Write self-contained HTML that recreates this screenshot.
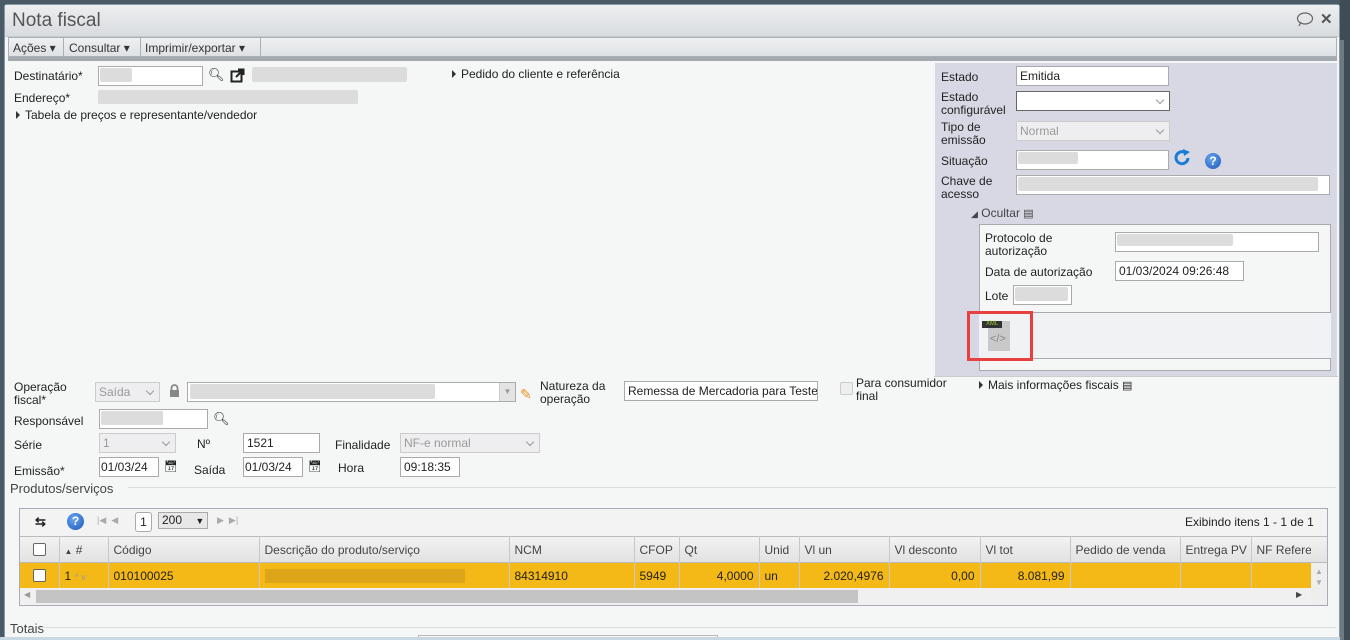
<!DOCTYPE html>
<html><head><meta charset="utf-8"><style>
*{margin:0;padding:0;box-sizing:border-box}
body{width:1350px;height:640px;overflow:hidden;background:#4a5a66;font-family:"Liberation Sans",sans-serif;font-size:12px;color:#222;position:relative}
.a{position:absolute}
.inp{position:absolute;background:#fff;border:1px solid #aaa;height:20px;padding:1px 3px;font-size:12px;line-height:16px;white-space:nowrap;overflow:hidden}
.dis{background:#eeeef0;border-color:#ccc;color:#999}
.blur{position:absolute;background:#dcdcdc;border-radius:2px}
.sel::after{content:"";position:absolute;right:6px;top:5px;width:5px;height:5px;border-right:1.5px solid #999;border-bottom:1.5px solid #999;transform:rotate(45deg)}
.lbl{position:absolute;line-height:13px}
.tri{display:inline-block;width:0;height:0;border-left:4px solid #333;border-top:4px solid transparent;border-bottom:4px solid transparent;margin-right:5px}
th,td{font-weight:normal;text-align:left;padding:0 5px;white-space:nowrap;overflow:hidden;border-right:1px solid #c8c8c8}
table{border-collapse:collapse;table-layout:fixed}
</style></head><body>
<div class="a" style="left:4px;top:4px;width:1336px;height:636px;background:#f5f6f6;border:1px solid #8a98a2;border-radius:3px 3px 0 0"></div>
<div class="a" style="left:5px;top:5px;width:1334px;height:32px;background:linear-gradient(#eceef0,#d9dcdf);border-bottom:1px solid #c5c8cc"></div>
<div class="a" style="left:12px;top:10px;font-size:19px;color:#555">Nota fiscal</div>
<svg class="a" style="left:1296px;top:12px" width="18" height="15"><ellipse cx="9" cy="6.5" rx="7.5" ry="5.5" fill="none" stroke="#666" stroke-width="1.2"/><path d="M3 14 L5 10" stroke="#666" stroke-width="1.2"/></svg>
<div class="a" style="left:1320px;top:10px;font-size:15px;font-weight:bold;color:#555">✕</div>
<div class="a" style="left:8px;top:37px;width:1329px;height:20px;background:linear-gradient(#eef0f2,#dfe2e5);border:1px solid #aab0b5"></div>
<div class="a" style="left:13px;top:41px;color:#333">Ações ▾</div>
<div class="a" style="left:63px;top:38px;width:1px;height:18px;background:#aab0b5"></div>
<div class="a" style="left:69px;top:41px;color:#333">Consultar ▾</div>
<div class="a" style="left:140px;top:38px;width:1px;height:18px;background:#aab0b5"></div>
<div class="a" style="left:145px;top:41px;color:#333">Imprimir/exportar ▾</div>
<div class="a" style="left:260px;top:38px;width:1px;height:18px;background:#aab0b5"></div>
<div class="a" style="left:8px;top:57px;width:1329px;height:4px;background:#a4aab0"></div>

<div class="lbl" style="left:14px;top:70px">Destinatário*</div>
<div class="inp" style="left:98px;top:66px;width:105px"></div><div class="blur" style="left:100px;top:68px;width:32px;height:14px"></div>
<div class="a" style="left:208px;top:67px;font-size:13px">&#x1F50D;&#xFE0E;</div>
<svg class="a" style="left:230px;top:68px" width="15" height="15"><rect x="1.5" y="3.5" width="10" height="10" fill="none" stroke="#222" stroke-width="2"/><path d="M6 9 L13 2 M8 1.5 H13.5 V7" stroke="#222" stroke-width="2" fill="none"/></svg>
<div class="blur" style="left:252px;top:67px;width:155px;height:15px"></div>
<div class="lbl" style="left:452px;top:68px"><span class="tri"></span>Pedido do cliente e referência</div>
<div class="lbl" style="left:14px;top:92px">Endereço*</div>
<div class="blur" style="left:98px;top:90px;width:260px;height:14px"></div>
<div class="lbl" style="left:16px;top:109px"><span class="tri"></span>Tabela de preços e representante/vendedor</div>

<!-- right panel -->
<div class="a" style="left:935px;top:63px;width:402px;height:314px;background:#d8d8e4"></div>
<div class="lbl" style="left:941px;top:71px">Estado</div>
<div class="inp" style="left:1016px;top:66px;width:153px">Emitida</div>
<div class="lbl" style="left:941px;top:91px">Estado<br>configurável</div>
<div class="inp sel" style="left:1016px;top:91px;width:154px;border-color:#666"></div>
<div class="lbl" style="left:941px;top:121px">Tipo de<br>emissão</div>
<div class="inp dis sel" style="left:1016px;top:121px;width:154px">Normal</div>
<div class="lbl" style="left:941px;top:155px">Situação</div>
<div class="inp" style="left:1016px;top:150px;width:153px"></div><div class="blur" style="left:1018px;top:152px;width:60px;height:12px"></div>
<svg class="a" style="left:1174px;top:149px" width="18" height="17"><path d="M14 9 A6 6 0 1 1 11 3.5" fill="none" stroke="#1c7cd0" stroke-width="3"/><path d="M9 0 L16 3 L10 7 Z" fill="#1c7cd0"/></svg>
<div class="a" style="left:1205px;top:153px;width:16px;height:16px;border-radius:50%;background:radial-gradient(circle at 40% 35%,#6aa6f0,#1a55b8);color:#fff;font-weight:bold;font-size:12px;text-align:center;line-height:16px">?</div>
<div class="lbl" style="left:941px;top:175px">Chave de<br>acesso</div>
<div class="inp" style="left:1016px;top:175px;width:314px"></div><div class="blur" style="left:1018px;top:177px;width:300px;height:14px"></div>
<div class="lbl" style="left:971px;top:207px;color:#444"><span style="font-size:9px">◢</span> Ocultar <span style="font-size:11px">▤</span></div>
<div class="a" style="left:979px;top:224px;width:352px;height:147px;background:#f5f6f6;border:1px solid #aaa"></div>
<div class="a" style="left:979px;top:312px;width:352px;height:47px;border-top:1px solid #aaa;border-bottom:1px solid #aaa;background:#f1f2f3"></div>
<div class="lbl" style="left:985px;top:232px">Protocolo de<br>autorização</div>
<div class="inp" style="left:1115px;top:232px;width:204px"></div><div class="blur" style="left:1117px;top:234px;width:116px;height:12px"></div>
<div class="lbl" style="left:985px;top:266px">Data de autorização</div>
<div class="inp" style="left:1115px;top:261px;width:129px">01/03/2024 09:26:48</div>
<div class="lbl" style="left:985px;top:290px">Lote</div>
<div class="inp" style="left:1013px;top:285px;width:59px"></div><div class="blur" style="left:1015px;top:287px;width:53px;height:14px"></div>
<div class="a" style="left:967px;top:311px;width:66px;height:50px;border:3px solid #e8403f"></div>
<div class="a" style="left:988px;top:321px;width:22px;height:30px;background:#c9c9c9"></div>
<div class="a" style="left:982px;top:321px;width:20px;height:7px;background:#333;color:#9c3;font-size:6px;line-height:7px;text-align:center">XML</div>
<div class="a" style="left:990px;top:333px;color:#888;font-size:11px">&lt;/&gt;</div>
<div class="a" style="left:934px;top:376px;width:404px;height:1px;background:#ccc"></div>

<!-- form lower -->
<div class="lbl" style="left:14px;top:381px">Operação<br>fiscal*</div>
<div class="inp dis sel" style="left:95px;top:382px;width:65px">Saída</div>
<svg class="a" style="left:169px;top:384px" width="11" height="14"><path d="M2.5 6 V4 A3 3 0 0 1 8.5 4 V6" fill="none" stroke="#888" stroke-width="1.8"/><rect x="1" y="6" width="9" height="7" fill="#888"/></svg>
<div class="inp" style="left:187px;top:382px;width:329px"></div><div class="blur" style="left:190px;top:384px;width:245px;height:15px"></div>
<div class="a" style="left:499px;top:383px;width:16px;height:18px;background:#e4e4e4;border-left:1px solid #ccc;color:#999;font-size:8px;text-align:center;line-height:18px">▼</div>
<div class="a" style="left:520px;top:386px;color:#e8921e;font-size:14px">✎</div>
<div class="lbl" style="left:540px;top:380px">Natureza da<br>operação</div>
<div class="inp" style="left:624px;top:381px;width:194px">Remessa de Mercadoria para Teste</div>
<div class="a" style="left:840px;top:382px;width:13px;height:13px;border:1px solid #ccc;background:#eee;border-radius:2px"></div>
<div class="lbl" style="left:856px;top:377px">Para consumidor<br>final</div>
<div class="lbl" style="left:979px;top:379px"><span class="tri"></span>Mais informações fiscais <span style="font-size:11px">▤</span></div>
<div class="lbl" style="left:14px;top:415px">Responsável</div>
<div class="inp" style="left:99px;top:409px;width:109px"></div><div class="blur" style="left:101px;top:411px;width:62px;height:14px"></div>
<div class="a" style="left:213px;top:411px;font-size:13px">&#x1F50D;&#xFE0E;</div>
<div class="lbl" style="left:14px;top:439px">Série</div>
<div class="inp dis sel" style="left:99px;top:433px;width:77px">1</div>
<div class="lbl" style="left:197px;top:438px">Nº</div>
<div class="inp" style="left:243px;top:433px;width:77px">1521</div>
<div class="lbl" style="left:335px;top:439px">Finalidade</div>
<div class="inp dis sel" style="left:400px;top:433px;width:140px">NF-e normal</div>
<div class="lbl" style="left:14px;top:465px">Emissão*</div>
<div class="inp" style="left:99px;top:457px;width:60px;padding-left:1px">01/03/24</div>
<div class="a" style="left:164px;top:460px;font-size:11px">📅&#xFE0E;</div>
<div class="lbl" style="left:194px;top:464px">Saída</div>
<div class="inp" style="left:243px;top:457px;width:60px;padding-left:1px">01/03/24</div>
<div class="a" style="left:308px;top:460px;font-size:11px">📅&#xFE0E;</div>
<div class="lbl" style="left:338px;top:462px">Hora</div>
<div class="inp" style="left:400px;top:457px;width:60px">09:18:35</div>

<div class="a" style="left:10px;top:481px;font-size:13px;color:#444">Produtos/serviços</div>
<div class="a" style="left:128px;top:487px;width:1208px;height:1px;background:#ddd"></div>
<div class="a" style="left:19px;top:508px;width:1309px;height:98px;border:1px solid #aab;background:#f3f3f3"></div>
<div class="a" style="left:35px;top:514px;font-size:13px;font-weight:bold">⇆</div>
<div class="a" style="left:67px;top:513px;width:17px;height:17px;border-radius:50%;background:radial-gradient(circle at 40% 35%,#6aa6f0,#1a55b8);color:#fff;font-weight:bold;text-align:center;line-height:17px">?</div>
<div class="a" style="left:97px;top:515px;color:#aaa;font-size:9px">|◀ &nbsp;◀</div>
<div class="a" style="left:135px;top:512px;width:17px;height:20px;border:1px solid #aaa;border-radius:3px;background:#fff;text-align:center;line-height:18px">1</div>
<div class="a" style="left:158px;top:512px;width:50px;height:17px;border:1px solid #aaa;background:#e8e8e8;padding-left:3px;line-height:15px">200 <span style="font-size:9px;margin-left:10px">▼</span></div>
<div class="a" style="left:217px;top:515px;color:#aaa;font-size:9px">▶ &nbsp;▶|</div>
<div class="a" style="left:1185px;top:515px">Exibindo itens 1 - 1 de 1</div>
<div class="a" style="left:20px;top:536px;width:1307px;height:27px;background:linear-gradient(#f2f2f2,#e2e2e2);border-top:1px solid #bbb;border-bottom:1px solid #bbb"></div>
<div class="a" style="left:20px;top:536px;width:1291px">
<table style="width:1291px">
<colgroup><col style="width:39px"><col style="width:49px"><col style="width:151px"><col style="width:250px"><col style="width:125px"><col style="width:45px"><col style="width:80px"><col style="width:40px"><col style="width:90px"><col style="width:91px"><col style="width:90px"><col style="width:110px"><col style="width:71px"><col style="width:60px"></colgroup>
<tr style="height:27px;color:#444"><th><div style="width:13px;height:13px;border:1px solid #666;background:#fff;border-radius:2px;margin-left:8px"></div></th><th><span style="font-size:8px">▲</span> #</th><th>Código</th><th>Descrição do produto/serviço</th><th>NCM</th><th>CFOP</th><th>Qt</th><th>Unid</th><th>Vl un</th><th>Vl desconto</th><th>Vl tot</th><th>Pedido de venda</th><th>Entrega PV</th><th style="border-right:none">NF Refere</th></tr>
<tr style="height:25px;background:#f4b916"><td><div style="width:13px;height:13px;border:1px solid #666;background:#fff;border-radius:2px;margin-left:8px"></div></td><td>1 <span style="color:#999;font-size:9px">^ v</span></td><td>010100025</td><td><div style="width:200px;height:14px;background:#dca618"></div></td><td>84314910</td><td>5949</td><td style="text-align:right">4,0000</td><td>un</td><td style="text-align:right">2.020,4976</td><td style="text-align:right">0,00</td><td style="text-align:right">8.081,99</td><td></td><td></td><td style="border-right:none"></td></tr>
</table>
</div>
<div class="a" style="left:1311px;top:563px;width:16px;height:42px;background:#eee;color:#aaa;font-size:8px;text-align:center;line-height:11px;padding-top:3px">▲<br>▼</div>
<div class="a" style="left:20px;top:588px;width:1291px;height:17px;background:#f0f0f0"></div>
<div class="a" style="left:36px;top:590px;width:822px;height:13px;background:#c4c4c4"></div>
<div class="a" style="left:24px;top:590px;color:#999;font-size:8px">◀</div>
<div class="a" style="left:1296px;top:590px;color:#444;font-size:8px">▶</div>
<div class="a" style="left:10px;top:621px;font-size:13px;color:#444">Totais</div>
<div class="a" style="left:40px;top:627px;width:1296px;height:1px;background:#ddd"></div>
<div class="a" style="left:418px;top:635px;width:300px;height:5px;border:1px solid #bbb;border-bottom:none"></div>
<div class="a" style="left:0;top:637px;width:1350px;height:3px;background:#c8d8e4"></div>
<div class="a" style="left:1340px;top:0;width:10px;height:640px;background:#3e4c56"></div>
<div class="a" style="left:1340px;top:40px;width:4px;height:600px;background:#6e7a82"></div>
</body></html>
